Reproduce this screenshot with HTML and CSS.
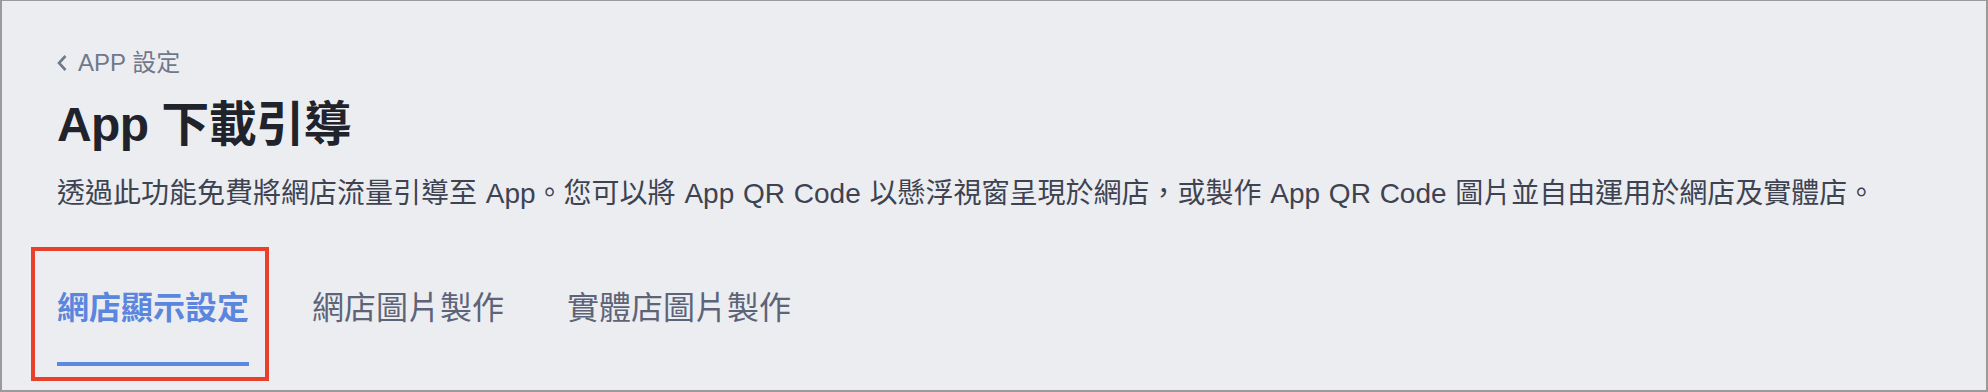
FILE: index.html
```html
<!DOCTYPE html>
<html lang="zh-Hant">
<head>
    <meta charset="UTF-8">
    <meta name="viewport" content="width=device-width, initial-scale=1.0">
    <title>App 下載引導</title>
    <link rel="stylesheet" href="styles.css">
</head>
<body>
    <div class="page">
        <a class="back" href="#">
            <svg class="back-icon" viewBox="0 0 10 18" xmlns="http://www.w3.org/2000/svg">
                <polyline points="8.5,2 2,9 8.5,16"/>
            </svg>
            APP 設定
        </a>
        <h1 class="title">App 下載引導</h1>
        <p class="desc">透過此功能免費將網店流量引導至 App。您可以將 App QR Code 以懸浮視窗呈現於網店，或製作 App QR Code 圖片並自由運用於網店及實體店。</p>
        <div class="tabs">
            <div class="tab active">網店顯示設定</div>
            <div class="tab">網店圖片製作</div>
            <div class="tab">實體店圖片製作</div>
        </div>
    </div>
</body>
</html>
```

FILE: styles.css
```css
* {
    box-sizing: border-box;
}
body {
    margin: 0;
    font-family: "Liberation Sans", "Noto Sans CJK TC", sans-serif;
    background-color: #ecedf0;
}
.page {
    height: 392px;
    padding: 46px 0 0 55px;
    border-top: 1px solid #9a9a9a;
    border-left: 2px solid #9a9a9a;
    border-right: 2px solid #9a9a9a;
    border-bottom: 2px solid #9a9a9a;
    background-color: #ecedf0;
    overflow: hidden;
}
.back {
    display: flex;
    align-items: center;
    height: 32px;
    font-size: 24px;
    line-height: 32px;
    color: #6f788c;
    text-decoration: none;
}
.back-icon {
    width: 10px;
    height: 18px;
    margin-right: 11px;
    fill: none;
    stroke: #6f788c;
    stroke-width: 2.6;
}
.title {
    margin: 16px 0 0;
    font-size: 48px;
    line-height: 60px;
    font-weight: bold;
    letter-spacing: -0.6px;
    color: #20232b;
}
.desc {
    margin: 19px 0 0;
    font-size: 28px;
    line-height: 40px;
    word-spacing: 1px;
    color: #3e4352;
}
.tabs {
    display: flex;
    gap: 63px;
    margin-top: 72px;
}
.tab {
    position: relative;
    font-size: 32px;
    line-height: 44px;
    padding-bottom: 32px;
    border-bottom: 4px solid transparent;
    color: #5d6478;
}
.tab.active {
    color: #5b86de;
    font-weight: bold;
    border-bottom-color: #5b88e0;
}
.tab.active::after {
    content: "";
    position: absolute;
    top: -39px;
    left: -26px;
    right: -20px;
    bottom: -19px;
    border: 4px solid #e8402a;
}
```
